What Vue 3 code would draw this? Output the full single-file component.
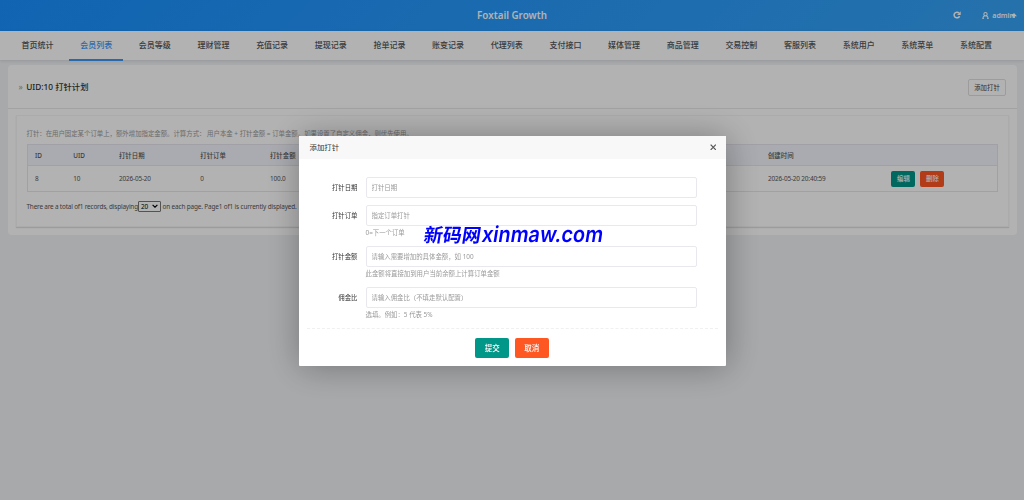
<template>
  <div class="page">
    <header class="topbar">
      <div class="brand">Foxtail Growth</div>
      <div class="tools">
        <svg class="refresh" viewBox="0 0 16 16">
          <path d="M13.2 10.2A5.7 5.7 0 1 1 12 4" fill="none" stroke="currentColor" stroke-width="3" />
          <path d="M15.4 0.6v7.2H8.2z" fill="currentColor" />
        </svg>
        <div class="account">
          <svg class="user" viewBox="0 0 16 16" fill="none" stroke="currentColor" stroke-width="2.4">
            <circle cx="8" cy="5" r="3.8" />
            <path d="M2 15c0-4 1.6-5.6 4-6.6M14 15c0-4-1.6-5.6-4-6.6M0.8 14.8h3.4M11.8 14.8h3.4" />
          </svg>
          <span>admin</span>
          <svg class="caret" viewBox="0 0 10 8"><path d="M0 5.2L5 0l5 5.2H6.4V8H3.8V5.2z" fill="currentColor" /></svg>
        </div>
      </div>
    </header>

    <nav class="nav">
      <a v-for="item in menus" :key="item" class="nav-item" :class="{ active: item === current }" @click="current = item">{{ item }}</a>
    </nav>

    <main class="card">
      <div class="card-header">
        <div class="card-title"><span class="arrow">»</span>UID:10 打针计划</div>
        <button class="btn-add" @click="visible = true">添加打针</button>
      </div>
      <div class="card-body">
        <div class="panel">
          <p class="tip">打针：在用户固定某个订单上，额外增加指定金额。计算方式： 用户本金 + 打针金额 = 订单金额。如果设置了自定义佣金，则优先使用。</p>
          <div class="table">
            <div class="row head">
              <span>ID</span><span>UID</span><span>打针日期</span><span>打针订单</span><span>打针金额</span><span>创建时间</span><span></span>
            </div>
            <div v-for="row in rows" :key="row.id" class="row">
              <span>{{ row.id }}</span>
              <span>{{ row.uid }}</span>
              <span>{{ row.date }}</span>
              <span>{{ row.order }}</span>
              <span>{{ row.amount }}</span>
              <span>{{ row.created }}</span>
              <span class="ops">
                <button class="btn-sm green">编辑</button>
                <button class="btn-sm orange">删除</button>
              </span>
            </div>
          </div>
          <div class="pager">
            <span class="pager-left">There are a total of1 records, displaying</span>
            <span class="select">20
              <svg viewBox="0 0 10 6"><path d="M1 1l4 4 4-4" fill="none" stroke="currentColor" stroke-width="2" /></svg>
            </span>
            <span class="pager-right">on each page. Page1 of1 is currently displayed.</span>
          </div>
        </div>
      </div>
    </main>

    <!-- 弹窗 -->
    <div v-if="visible" class="mask">
      <div class="modal">
        <div class="modal-header">
          <span>添加打针</span>
          <svg class="close" viewBox="0 0 10 10" @click="visible = false"><path d="M1 1l8 8M9 1L1 9" stroke="currentColor" stroke-width="1.9" /></svg>
        </div>
        <div class="modal-body">
          <div v-for="field in fields" :key="field.label" class="field">
            <label>{{ field.label }}</label>
            <div class="control">
              <input type="text" :placeholder="field.placeholder">
              <div v-if="field.hint" class="hint">{{ field.hint }}</div>
            </div>
          </div>
        </div>
        <div class="modal-footer">
          <button class="btn green">提交</button>
          <button class="btn orange" @click="visible = false">取消</button>
        </div>
      </div>
    </div>

    <svg class="watermark" viewBox="0 0 200 36">
      <g transform="skewX(-9)">
        <text x="8" y="25" textLength="57" lengthAdjust="spacingAndGlyphs" class="wm-cn">新码网</text>
        <text x="66" y="25" textLength="121" lengthAdjust="spacingAndGlyphs" class="wm-en">xinmaw.com</text>
      </g>
    </svg>
  </div>
</template>

<script setup>
import { ref } from 'vue';

const menus = [
  '首页统计', '会员列表', '会员等级', '理财管理', '充值记录', '提现记录',
  '抢单记录', '账变记录', '代理列表', '支付接口', '媒体管理', '商品管理',
  '交易控制', '客服列表', '系统用户', '系统菜单', '系统配置',
];
const current = ref('会员列表');
const visible = ref(true);

const rows = [
  { id: 8, uid: 10, date: '2026-05-20', order: 0, amount: '100.0', created: '2026-05-20 20:40:59' },
];

const fields = [
  { label: '打针日期', placeholder: '打针日期' },
  { label: '打针订单', placeholder: '指定订单打针', hint: '0=下一个订单' },
  { label: '打针金额', placeholder: '请输入需要增加的具体金额，如 100', hint: '此金额将直接加到用户当前余额上计算订单金额' },
  { label: '佣金比', placeholder: '请输入佣金比（不填走默认配置）', hint: '选填。例如：5 代表 5%' },
];
</script>

<style>
body {
  margin: 0;
  background: #f0f2f5;
}
</style>

<style scoped>
* {
  box-sizing: border-box;
}

.page {
  height: 500px;
  overflow: hidden;
  background: #f0f2f5;
  color: #555;
  font-family: "Noto Sans", "Noto Sans CJK SC", sans-serif;
  font-size: 6.4px;
}

button,
input {
  font-family: inherit;
}

.topbar {
  height: 30.5px;
  display: grid;
  grid-template-columns: 1fr auto 1fr;
  align-items: center;
  background: linear-gradient(135deg, #1890ff, #36a3f7);
  color: #fff;
}

.brand {
  grid-column: 2;
  font-size: 9.8px;
  font-weight: 600;
}

.tools {
  display: flex;
  justify-content: flex-end;
  align-items: center;
  gap: 21px;
  padding-right: 7px;
}

.refresh {
  width: 8px;
  height: 8px;
}

.account {
  display: flex;
  align-items: center;
  font-size: 7px;
  font-weight: 600;
}

.user {
  width: 7px;
  height: 7px;
  margin-right: 3px;
}

.caret {
  width: 6px;
  height: 5px;
  margin-left: -3px;
}

.nav {
  height: 29.5px;
  display: flex;
  gap: 4.67px;
  padding-left: 10.5px;
  background: #fff;
  box-shadow: 0 1px 3px rgba(0, 21, 41, 0.12);
}

.nav-item {
  width: 54px;
  height: 30.5px;
  line-height: 27px;
  text-align: center;
  font-size: 8px;
  font-weight: 500;
  color: #50555a;
  border-bottom: 2px solid transparent;
  white-space: nowrap;
}

.nav-item.active {
  color: #3d96f7;
  border-bottom-color: #3d96f7;
}

.card {
  margin: 5px 7.5px 0 8px;
  height: 170px;
  background: #fff;
  border-radius: 4px;
}

.card-header {
  height: 43.5px;
  display: flex;
  justify-content: space-between;
  align-items: center;
  padding: 1px 10.5px 0 10.5px;
  border-bottom: 1px solid #e9e9e9;
}

.card-title {
  padding-bottom: 2px;
  font-size: 8.3px;
  font-weight: 500;
  color: #333;
}

.arrow {
  margin-right: 3.5px;
  font-weight: 400;
  color: #999;
}

.btn-add {
  width: 38px;
  height: 17px;
  margin-top: 1px;
  padding: 0;
  border: 1px solid #e0e0e0;
  border-radius: 2px;
  background: #fff;
  color: #444;
  font-size: 6.4px;
}

.card-body {
  padding: 6.5px 7.5px 0 8px;
}

.panel {
  height: 112px;
  padding: 12px 10px 0 9.5px;
  border: 1px solid #f5f5f5;
  box-shadow: 0 1px 1px rgba(0, 0, 0, 0.12);
}

.tip {
  margin: 0;
  height: 16px;
  line-height: 11px;
  color: #999;
  white-space: pre;
}

.table {
  border: 1px solid #e6e6ee;
}

.row {
  display: grid;
  grid-template-columns: 38.3px 45.7px 81.3px 69.7px 498px 123.5px 1fr;
  align-items: center;
  height: 25px;
  padding-left: 7.5px;
  letter-spacing: -0.15px;
}

.row.head {
  height: 21px;
  background: #f3f5fc;
  border-bottom: 1px solid #e6e6ee;
  font-weight: 500;
  letter-spacing: 0;
}

.ops {
  display: flex;
  gap: 5px;
}

.btn-sm {
  width: 24px;
  height: 16px;
  padding: 0;
  border: 0;
  border-radius: 2px;
  color: #fff;
  font-size: 6.4px;
  font-weight: 500;
}

.green {
  background: #009688;
}

.orange {
  background: #ff5722;
}

.pager {
  display: flex;
  align-items: center;
  height: 12px;
  margin-top: 8px;
  font-size: 6.4px;
  letter-spacing: -0.14px;
  color: #555;
  white-space: nowrap;
}

.pager-left {
  width: 111.5px;
  letter-spacing: -0.18px;
}

.select {
  display: flex;
  align-items: center;
  justify-content: space-between;
  width: 22.5px;
  height: 11px;
  padding: 0 2px;
  border: 1px solid #777;
  border-radius: 1px;
  color: #000;
}

.select svg {
  width: 6px;
  height: 4px;
}

.pager-right {
  margin-left: 2px;
}

.mask {
  position: fixed;
  inset: 0;
  background: rgba(0, 0, 0, 0.3);
  display: flex;
  align-items: flex-start;
  justify-content: center;
  padding-top: 135.5px;
}

.modal {
  width: 427px;
  height: 230.5px;
  background: #fff;
  box-shadow: 1px 1px 34px rgba(0, 0, 0, 0.32);
  border-radius: 1px;
}

.modal-header {
  height: 23px;
  display: flex;
  justify-content: space-between;
  align-items: center;
  padding: 0 9.5px 1px 11px;
  background: #f8f8f8;
  font-size: 7.4px;
  color: #333;
}

.close {
  width: 6.5px;
  height: 6.5px;
  margin-top: 1px;
  color: #555;
}

.modal-body {
  height: 170.5px;
  margin: 0 8px;
  padding-top: 18.5px;
  border-bottom: 1px dashed #f0f0f0;
}

.field {
  display: flex;
  min-height: 28.3px;
}

.field:nth-child(n + 2) {
  min-height: 41px;
}

label {
  width: 51px;
  margin-right: 8px;
  line-height: 21px;
  text-align: right;
  color: #333;
}

.control {
  width: 331.5px;
}

input {
  display: block;
  width: 100%;
  height: 20.7px;
  padding: 0 5px;
  border: 1px solid #e8e8ee;
  border-radius: 2px;
  background: #fff;
  font-size: 6.4px;
  outline: none;
}

input::placeholder {
  color: #999;
}

.hint {
  height: 13px;
  line-height: 13px;
  color: #999;
}

.modal-footer {
  display: flex;
  justify-content: center;
  gap: 5.5px;
  padding-top: 8.5px;
}

.btn {
  width: 34.2px;
  height: 20.5px;
  padding: 0;
  border: 0;
  border-radius: 2px;
  color: #fff;
  font-size: 7.5px;
  font-weight: 500;
}

.watermark {
  position: absolute;
  left: 419px;
  top: 216.5px;
  width: 200px;
  height: 36px;
  overflow: visible;
  fill: #00f;
  pointer-events: none;
}

.wm-cn {
  font: 700 19px "Noto Sans CJK SC", sans-serif;
}

.wm-en {
  font: 600 22px Inter, sans-serif;
}
</style>
